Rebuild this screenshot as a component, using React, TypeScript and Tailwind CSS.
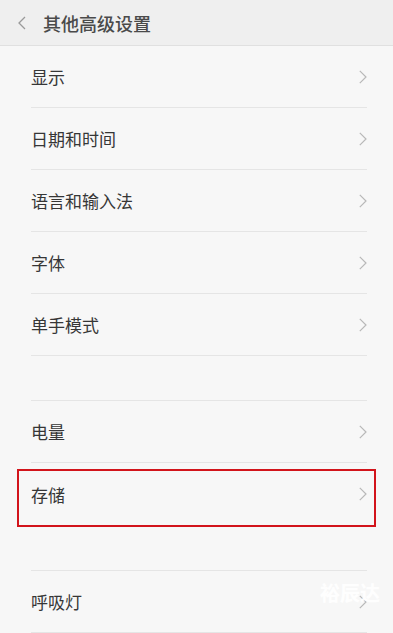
import React from "react";

const font = { fontFamily: '"Noto Sans CJK SC", "Noto Sans", sans-serif' };

function Chevron() {
  return (
    <svg width="8" height="14" viewBox="0 0 8 14" className="shrink-0">
      <path d="M0.8 0.8 L7 7 L0.8 13.2" fill="none" stroke="#b8b8b8" strokeWidth="1.2" />
    </svg>
  );
}

function Row({ label, last = false, highlight = false }: { label: string; last?: boolean; highlight?: boolean }) {
  return (
    <div className="relative">
      <div className={`h-[62px] ml-[31px] mr-[26px] flex items-center justify-between ${last ? "" : "border-b border-[#e5e5e5]"}`}>
        <span className="text-[17px] text-[#363636] leading-none">{label}</span>
        <Chevron />
      </div>
      {highlight && (
        <div className="absolute left-[17px] right-[17px] top-[6px] h-[58px] border-2 border-[#d2141b]" />
      )}
    </div>
  );
}

export default function App() {
  return (
    <div className="w-[393px] h-[633px] bg-[#f7f7f7] overflow-hidden relative" style={font}>
      <div className="h-[46px] bg-[#efefef] border-b border-[#e0e0e0] flex items-center">
        <svg width="10" height="14" viewBox="0 0 10 14" className="ml-[17px]">
          <path d="M8 1 L2 7 L8 13" fill="none" stroke="#9a9a9a" strokeWidth="1.3" />
        </svg>
        <span className="ml-[16px] text-[18px] font-medium text-[#4a4a4a] leading-none">其他高级设置</span>
      </div>
      <div>
        <Row label="显示" />
        <Row label="日期和时间" />
        <Row label="语言和输入法" />
        <Row label="字体" />
        <Row label="单手模式" />
      </div>
      <div className="h-[44px]" />
      <div className="ml-[31px] mr-[26px] border-t border-[#e5e5e5]" />
      <div>
        <Row label="电量" />
        <Row label="存储" last highlight />
      </div>
      <div className="h-[45px]" />
      <div className="ml-[31px] mr-[26px] border-t border-[#e5e5e5]" />
      <div>
        <Row label="呼吸灯" />
      </div>
      <div className="absolute left-[320px] top-[583px] text-[20px] font-bold text-white/90 leading-none">
        裕辰达
      </div>
    </div>
  );
}
